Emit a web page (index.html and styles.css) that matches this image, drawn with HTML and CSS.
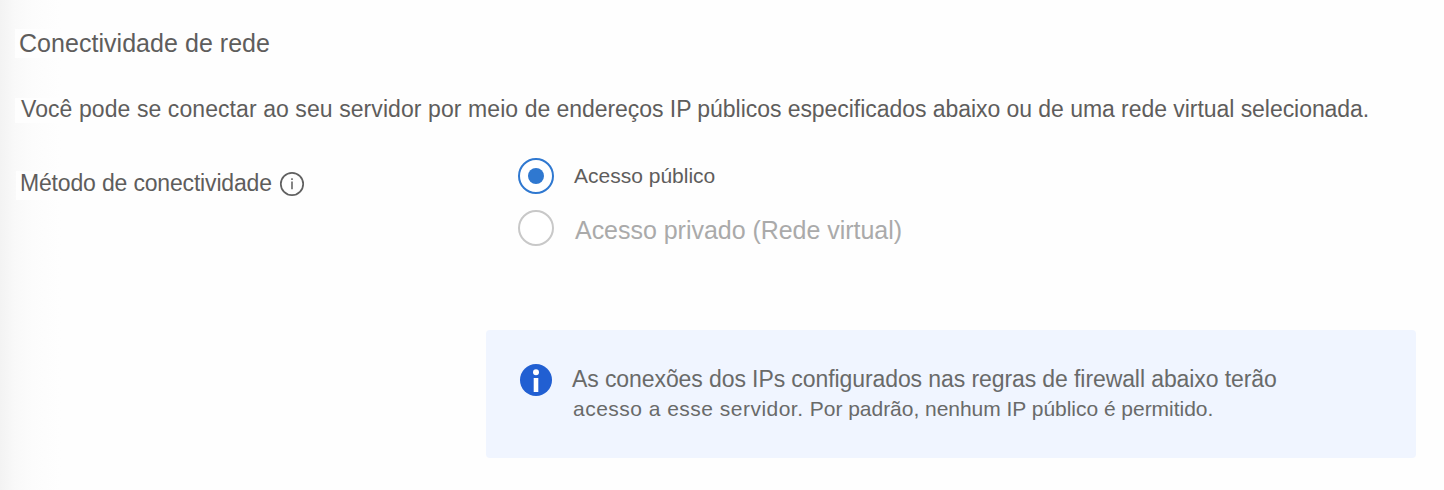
FILE: index.html
```html
<!DOCTYPE html>
<html lang="pt-BR">
<head>
<meta charset="utf-8">
<title>Conectividade de rede</title>
<link rel="stylesheet" href="styles.css">
</head>
<body>
<main class="page">
  <h1 class="title">Conectividade de rede</h1>
  <p class="intro"><span class="intro-lead">Você pode se conectar ao seu servidor por meio </span><span class="intro-rest">de endereços IP públicos especificados abaixo ou de uma rede virtual selecionada.</span></p>
  <div class="row">
    <div class="label"><span class="label-text">Método de conectividade</span>
      <svg class="hint" width="26" height="26" viewBox="0 0 26 26"><circle cx="13" cy="13" r="11.2" fill="none" stroke="#606060" stroke-width="1.7"/><path d="M13 10.5v7.8M13 7.2v1.8" stroke="#707070" stroke-width="1.7"/></svg>
    </div>
    <div class="options">
      <label class="option"><span class="radio checked"></span><span class="public">Acesso público</span></label>
      <label class="option disabled"><span class="radio"></span><span class="private">Acesso privado (Rede virtual)</span></label>
    </div>
  </div>
  <aside class="notice">
    <svg width="32" height="32" viewBox="0 0 32 32"><circle cx="16" cy="16" r="16" fill="#215fd2"/><circle cx="16" cy="8.2" r="3" fill="#fff"/><path d="M13.7 14h4.6v14h-4.6z" fill="#fff"/></svg>
    <div class="message"><p class="first">As conexões dos IPs configurados nas regras de firewall abaixo terão</p><p class="second"><span class="second-lead">acesso a esse servidor. </span>Por padrão, nenhum IP público é permitido.</p></div>
  </aside>
</main>
</body>
</html>
```
FILE: styles.css
```css
* { box-sizing: border-box; }
body { margin: 0; font-family: "Liberation Sans", Arial, sans-serif; color: #5e5d5c; background: #fff; }
h1, p { margin: 0; font-weight: 400; white-space: nowrap; }
.page { height: 490px; padding: 29px 28px 0 15px; background: linear-gradient(90deg, #f3f3f3, #f9f9f9 15px, #fcfcfc 32px, #fdfdfd 45px, #fefefe 61px); }
.title { width: 258px; height: 29px; padding-left: 4px; background: #fefefe; font-size: 25px; line-height: 29px; letter-spacing: .04px; }
.intro { width: 1360px; height: 25px; margin-top: 40px; padding-left: 6px; background: #fefefe; font-size: 23px; line-height: 23px; }
.intro-lead { letter-spacing: .08px; }
.intro-rest { letter-spacing: -.05px; }
.row { display: flex; margin-top: 35px; }
.label { display: flex; width: 503px; padding: 13px 0 0 1px; }
.label-text { width: 263px; height: 29px; padding-left: 4px; background: #fefefe; font-size: 23px; line-height: 25px; letter-spacing: -.17px; white-space: nowrap; }
.hint { flex: none; }
.options { display: flex; flex-direction: column; gap: 16px; }
.option { display: flex; align-items: center; gap: 20px; height: 36px; white-space: nowrap; }
.radio { display: flex; align-items: center; justify-content: center; width: 36px; height: 36px; border: 2px solid #c8c8c8; border-radius: 50%; background: #fff; }
.checked { border-color: #2f78d0; }
.checked::before { content: ""; width: 16px; height: 16px; border-radius: 50%; background: #2f78d0; }
.public { font-size: 21px; }
.private { padding: 5px 0 0 1px; font-size: 25px; letter-spacing: -.03px; color: #aaa; }
.notice { display: flex; gap: 20px; width: 930px; height: 128px; margin: 84px 0 0 471px; padding: 34px; border-radius: 4px; background: #f0f5ff; }
.message { color: #696a69; }
.first { font-size: 23px; line-height: 30px; letter-spacing: -.09px; }
.second { padding-left: 1px; font-size: 21px; line-height: 30px; letter-spacing: -.03px; }
.second-lead { letter-spacing: .48px; }
```
